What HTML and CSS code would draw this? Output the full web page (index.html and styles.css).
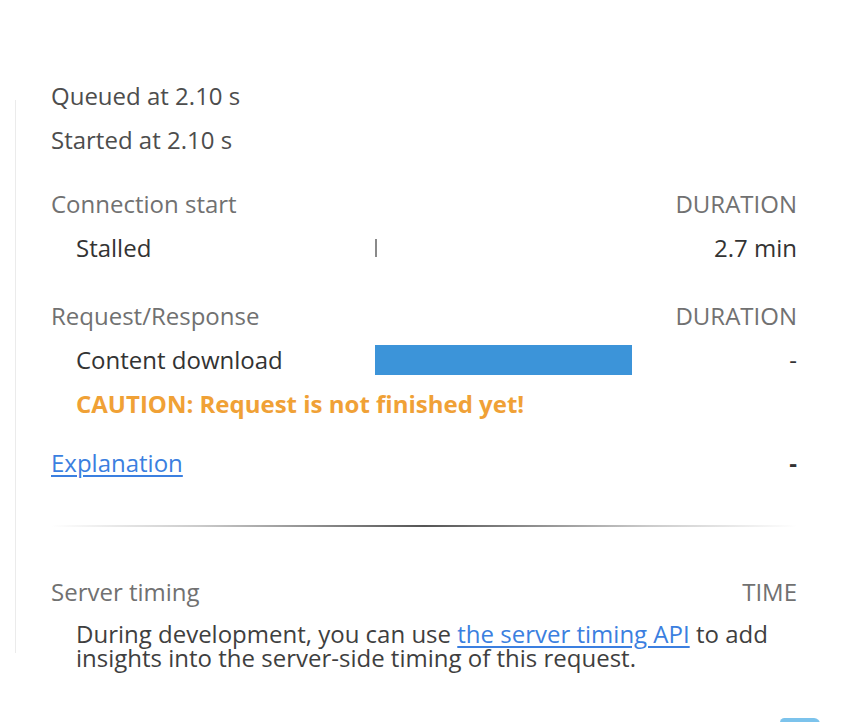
FILE: index.html
```html
<!DOCTYPE html>
<html>
<head>
<meta charset="utf-8">
<link rel="stylesheet" href="styles.css">
</head>
<body>
<div class="panel">
  <div class="line meta">Queued at 2.10 s</div>
  <div class="line meta">Started at 2.10 s</div>

  <div class="section first">
    <div class="row head">
      <span class="label">Connection start</span>
      <span></span>
      <span class="dur">DURATION</span>
    </div>
    <div class="row item">
      <span class="label">Stalled</span>
      <span class="barcell"><span class="tick"></span></span>
      <span class="dur">2.7 min</span>
    </div>
  </div>

  <div class="section second">
    <div class="row head">
      <span class="label">Request/Response</span>
      <span></span>
      <span class="dur">DURATION</span>
    </div>
    <div class="row item">
      <span class="label">Content download</span>
      <span class="barcell"><span class="bar"></span></span>
      <span class="dur">-</span>
    </div>
    <div class="caution">CAUTION: Request is not finished yet!</div>
  </div>

  <div class="row explain">
    <a class="link" href="#">Explanation</a>
    <span></span>
    <span class="dur dash">-</span>
  </div>

  <div class="divider"></div>

  <div class="row head server">
    <span class="label">Server timing</span>
    <span></span>
    <span class="dur">TIME</span>
  </div>
  <p class="note">During development, you can use <a class="link" href="#">the server timing API</a> to add<br>insights into the server-side timing of this request.</p>
</div>
<div class="blob"></div>
</body>
</html>
```
FILE: styles.css
```css
html, body {
  margin: 0;
  padding: 0;
  background: #ffffff;
}
body {
  font-family: "Open Sans", "Noto Sans", sans-serif;
  font-size: 24px;
  color: #333333;
  width: 856px;
  height: 722px;
  overflow: hidden;
  position: relative;
}
.panel {
  position: relative;
  padding: 74px 59px 0 51px;
}
.panel::before {
  content: "";
  position: absolute;
  left: 15px;
  top: 100px;
  width: 1px;
  height: 553px;
  background: #ebebeb;
}
.line {
  height: 44px;
  line-height: 44px;
}
.meta {
  color: #4d4d4d;
}
.section.first {
  margin-top: 20px;
}
.section.second {
  margin-top: 24px;
}
.row {
  display: grid;
  grid-template-columns: 324px 1fr auto;
  align-items: center;
  height: 44px;
  line-height: 44px;
}
.head {
  color: #717171;
}
.item .label {
  padding-left: 25px;
}
.item {
  color: #333333;
}
.dur {
  text-align: right;
}
.barcell {
  display: flex;
  align-items: center;
  height: 44px;
}
.tick {
  width: 2px;
  height: 18px;
  background: #8a8a8a;
}
.bar {
  width: 257px;
  height: 30px;
  background: #3c94d9;
}
.caution {
  height: 44px;
  line-height: 44px;
  padding-left: 25px;
  color: #f0a136;
  font-weight: 700;
}
.explain {
  margin-top: 15px;
}
.link {
  color: #3b7fe0;
  text-decoration: underline;
  text-underline-offset: 3px;
}
.dash {
  font-weight: 700;
  color: #333;
}
.divider {
  margin-top: 40px;
  height: 2px;
  background: linear-gradient(to right, rgba(80,80,80,0) 0%, rgba(80,80,80,0.3) 20%, #555 50%, rgba(80,80,80,0.3) 80%, rgba(80,80,80,0) 100%);
}
.server {
  margin-top: 43px;
}
.note {
  margin: 8px 0 0 25px;
  line-height: 24px;
  color: #3f3f3f;
}
.blob {
  position: absolute;
  left: 780px;
  top: 718px;
  width: 40px;
  height: 6px;
  border-radius: 12px 16px 0 0;
  background: #7cc3ec;
}
```
